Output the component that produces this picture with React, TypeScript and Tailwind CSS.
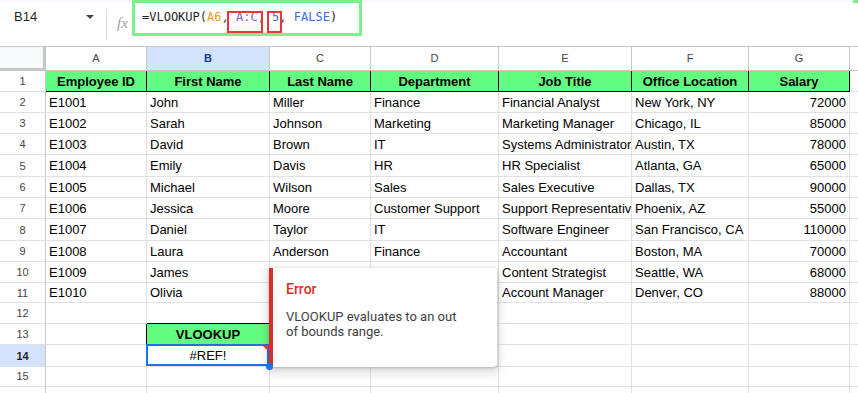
import React from "react";

type Cell = string;

const rows: { n: number; h: string; cells: Cell[] }[] = [
  { n: 1, h: "h-[21px]", cells: ["Employee ID", "First Name", "Last Name", "Department", "Job Title", "Office Location", "Salary"] },
  { n: 2, h: "h-[21px]", cells: ["E1001", "John", "Miller", "Finance", "Financial Analyst", "New York, NY", "72000"] },
  { n: 3, h: "h-[21px]", cells: ["E1002", "Sarah", "Johnson", "Marketing", "Marketing Manager", "Chicago, IL", "85000"] },
  { n: 4, h: "h-[21px]", cells: ["E1003", "David", "Brown", "IT", "Systems Administrator", "Austin, TX", "78000"] },
  { n: 5, h: "h-[22px]", cells: ["E1004", "Emily", "Davis", "HR", "HR Specialist", "Atlanta, GA", "65000"] },
  { n: 6, h: "h-[21px]", cells: ["E1005", "Michael", "Wilson", "Sales", "Sales Executive", "Dallas, TX", "90000"] },
  { n: 7, h: "h-[21px]", cells: ["E1006", "Jessica", "Moore", "Customer Support", "Support Representative", "Phoenix, AZ", "55000"] },
  { n: 8, h: "h-[22px]", cells: ["E1007", "Daniel", "Taylor", "IT", "Software Engineer", "San Francisco, CA", "110000"] },
  { n: 9, h: "h-[21px]", cells: ["E1008", "Laura", "Anderson", "Finance", "Accountant", "Boston, MA", "70000"] },
  { n: 10, h: "h-[21px]", cells: ["E1009", "James", "Thomas", "Marketing", "Content Strategist", "Seattle, WA", "68000"] },
  { n: 11, h: "h-[20px]", cells: ["E1010", "Olivia", "Martinez", "Sales", "Account Manager", "Denver, CO", "88000"] },
  { n: 12, h: "h-[21px]", cells: ["", "", "", "", "", "", ""] },
  { n: 13, h: "h-[21px]", cells: ["", "VLOOKUP", "", "", "", "", ""] },
  { n: 14, h: "h-[21px]", cells: ["", "#REF!", "", "", "", "", ""] },
  { n: 15, h: "h-[21px]", cells: ["", "", "", "", "", "", ""] },
  { n: 16, h: "h-[21px]", cells: ["", "", "", "", "", "", ""] },
];

const GRID = "grid grid-cols-[46px_101px_123px_101px_128px_133px_117px_101px_1fr]";
const letters = ["A", "B", "C", "D", "E", "F", "G"];

function DataCell({ r, c, v }: { r: number; c: number; v: string }) {
  const base = "relative flex items-center whitespace-nowrap px-[3px] pt-[1px] text-[13px] border-r border-b";
  if (r === 1 || (r === 13 && c === 1)) {
    return (
      <div className={`${base} overflow-hidden justify-center bg-[#62fc80] border-black font-bold text-black`}>{v}</div>
    );
  }
  if (r === 14 && c === 1) {
    return (
      <div className={`${base} justify-center border-[#e1e1e1] text-black`}>
        {v}
        <div className="absolute left-[-1px] top-[-1px] right-0 bottom-0 border-2 border-[#1a73e8]" />
        <div className="absolute top-[1px] right-[1px] w-0 h-0 border-l-[5px] border-l-transparent border-t-[5px] border-t-[#ea4335]" />
        <div className="absolute right-[-4px] bottom-[-4px] w-[7px] h-[7px] rounded-full bg-[#1a73e8] z-30" />
      </div>
    );
  }
  const leftBlack = r === 13 && c === 0 ? "border-r-black" : "";
  const bottomBlack = r === 12 && c === 1 ? "border-b-black" : "";
  const num = c === 6 && v !== "";
  return (
    <div className={`${base} overflow-hidden border-[#e1e1e1] text-black ${num ? "justify-end" : ""} ${leftBlack} ${bottomBlack}`}>{v}</div>
  );
}

export default function App() {
  return (
    <div className="relative w-[858px] h-[393px] overflow-hidden bg-white font-['Liberation_Sans',Arial,sans-serif]">
      {/* Formula bar */}
      <div className="relative h-[46px] border-t-[3px] border-t-[#f8fafd] flex items-start">
        <div className="absolute right-0 top-[-3px] w-[5px] h-[3px] bg-[#7cf08e]" />
        <div className="w-[106px] pl-[14px] pr-[12px] pt-[4px] flex items-center justify-between leading-[20px]">
          <span className="text-[13px] text-[#1f1f1f]">B14</span>
          <span className="w-0 h-0 border-l-[4px] border-r-[4px] border-t-[4px] border-l-transparent border-r-transparent border-t-[#444]" />
        </div>
        <div className="w-px h-[31px] mt-[6px] bg-[#dadce0]" />
        <div className="w-[25px] pl-[10px] pt-[12px] text-[15px] leading-[16px] italic text-[#a0a0a0] font-['Liberation_Serif',serif]">fx</div>
        <div className="relative -mt-[3px] w-[230px] h-[36px] border-[3px] border-[#7cf08e] bg-white pl-[7px] pt-[6px] leading-[16px] text-[12px] whitespace-nowrap font-['DejaVu_Sans_Mono',monospace] text-[#1f1f1f]">
          <span>=VLOOKUP(</span>
          <span className="text-[#f09a1a]">A6</span>
          <span className="text-[#555]">, </span>
          <span className="relative text-[#8e63c7]">
            A:C
            <span className="absolute left-[-9px] right-[-5px] top-[1px] bottom-[-9px] border-2 border-[#e53935]" />
          </span>
          <span className="text-[#555]">, </span>
          <span className="relative text-[#3b6fd8]">
            5
            <span className="absolute left-[-5px] right-[-3px] top-[1px] bottom-[-9px] border-2 border-[#e53935]" />
          </span>
          <span className="text-[#555]">, </span>
          <span className="text-[#3b6fd8]">FALSE</span>
          <span>)</span>
        </div>
      </div>

      {/* Column headers */}
      <div className={`${GRID} h-[25px] border-t border-[#c4c7c5]`}>
        <div className="bg-[#f8f9fa] border-r-[3px] border-b-[3px] border-[#c4c7c5]" />
        {letters.map((l) => (
          <div
            key={l}
            className={`flex items-center justify-center text-[11px] border-r border-b border-[#c4c7c5] ${
              l === "B" ? "bg-[#d3e3fd] text-[#0b3d91] font-semibold" : "text-[#444]"
            }`}
          >
            {l}
          </div>
        ))}
        <div className="border-b border-[#c4c7c5]" />
      </div>

      {/* Rows */}
      {rows.map((row) => (
        <div key={row.n} className={`${GRID} ${row.h}`}>
          <div
            className={`flex items-center justify-center pt-[1px] text-[11px] border-r border-r-[#c4c7c5] border-b border-b-[#e1e1e1] ${
              row.n === 14 ? "bg-[#d3e3fd] font-bold text-[#1f1f1f]" : "text-[#444]"
            }`}
          >
            {row.n <= 15 ? row.n : ""}
          </div>
          {row.cells.map((v, c) => (
            <DataCell key={c} r={row.n} c={c} v={v} />
          ))}
          <div className="border-b border-[#e1e1e1]" />
        </div>
      ))}

      {/* Error popup */}
      <div className="absolute left-[269px] top-[268px] w-[228px] h-[99px] z-20 bg-white border-l-4 border-l-[#d93025] rounded-r-[4px] shadow-[0_1px_3px_rgba(60,64,67,0.3),0_4px_8px_3px_rgba(60,64,67,0.15)] pl-[13px] pt-[11px] font-['Roboto',sans-serif]">
        <div className="text-[14px] leading-[20px] font-medium text-[#d93025]">Error</div>
        <div className="mt-[10px] text-[13px] leading-[15px] text-[#3c4043]">
          VLOOKUP evaluates to an out
          <br />
          of bounds range.
        </div>
      </div>
    </div>
  );
}
